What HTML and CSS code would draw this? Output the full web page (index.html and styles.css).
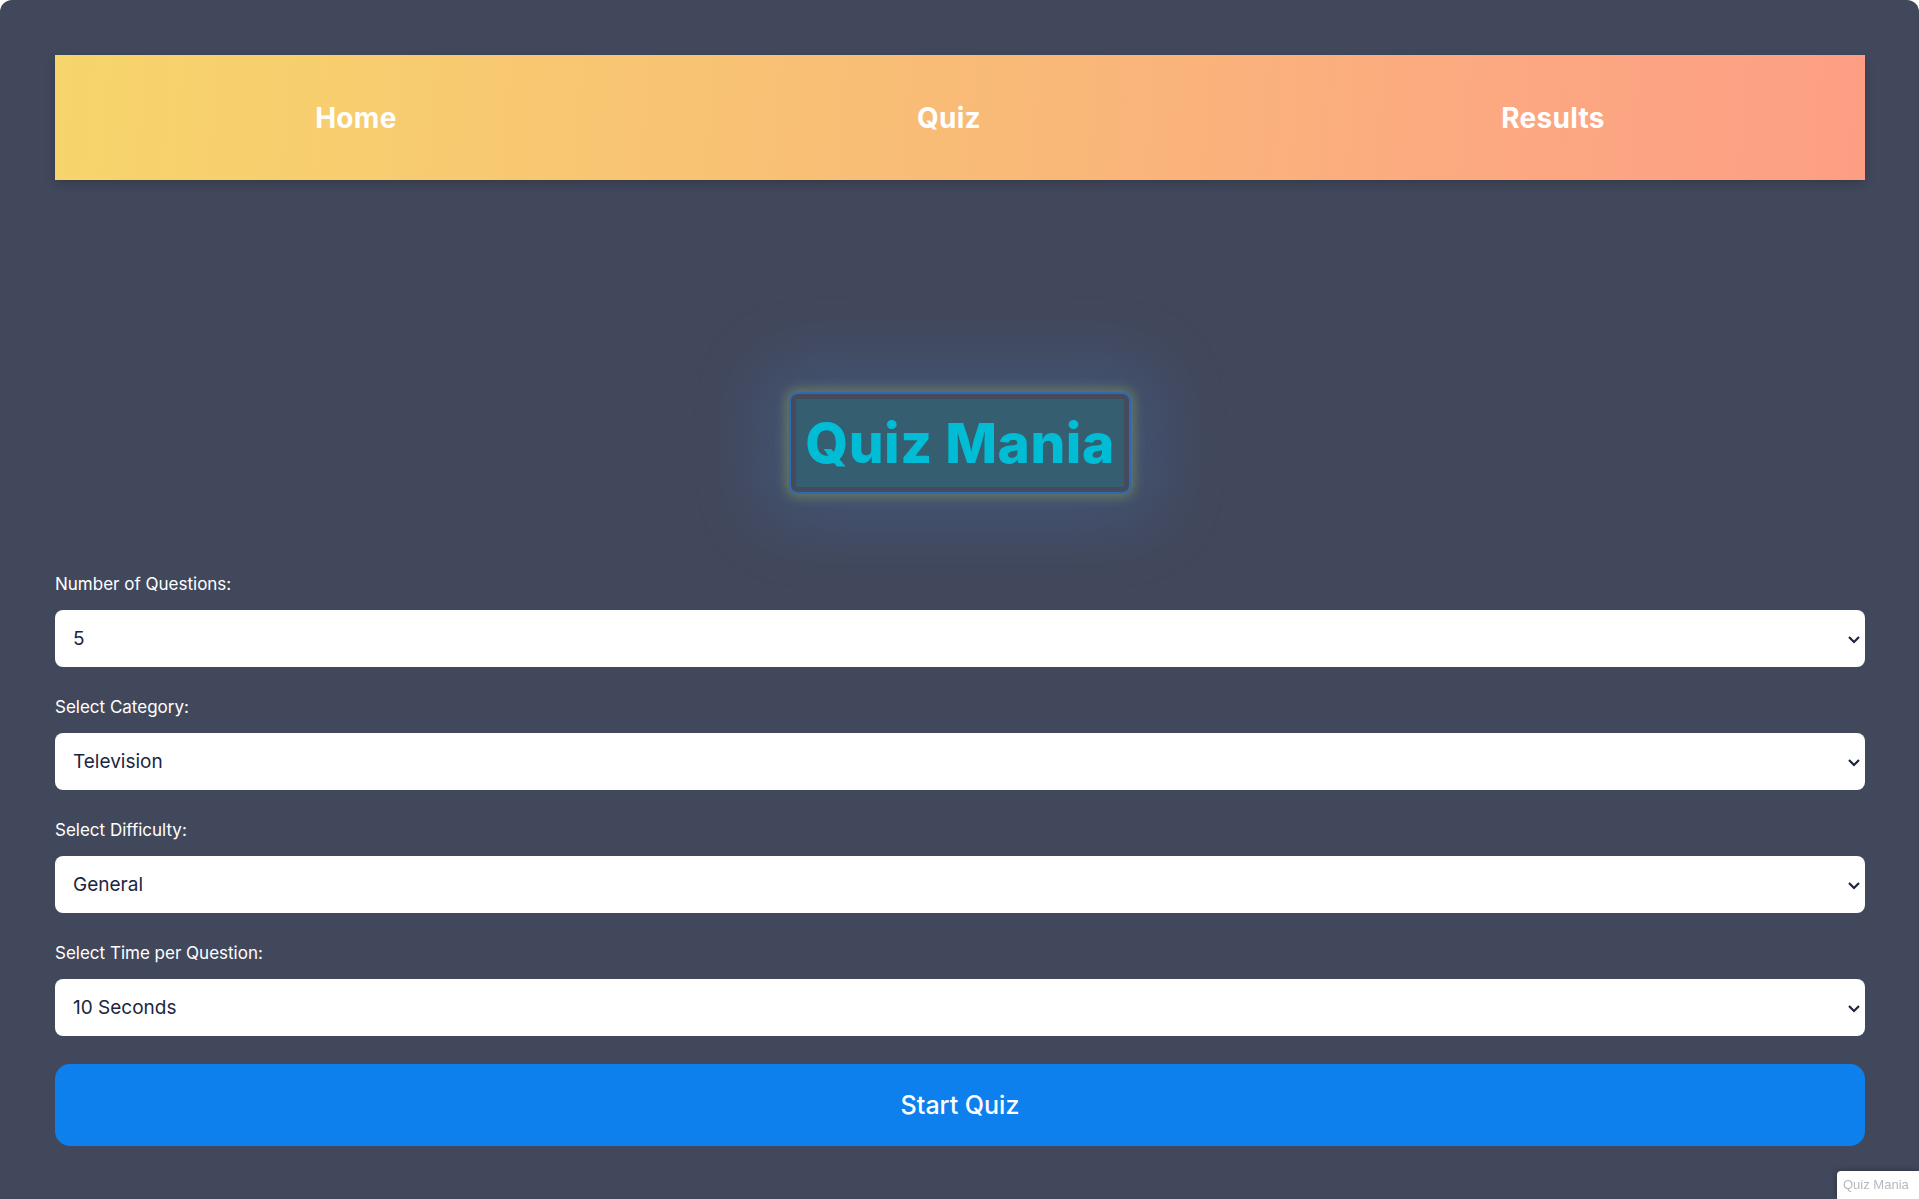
FILE: index.html
```html
<!DOCTYPE html>
<html lang="en">
<head>
<meta charset="utf-8">
<title>Quiz Mania</title>
<link rel="stylesheet" href="styles.css">
</head>
<body>
<div class="app">
  <nav class="nav">
    <a class="nav-link" href="#">Home</a>
    <a class="nav-link" href="#">Quiz</a>
    <a class="nav-link" href="#">Results</a>
  </nav>
  <div class="hero">
    <h1 class="title">Quiz Mania</h1>
  </div>
  <form class="form">
    <div class="field">
      <label class="label" for="num">Number of Questions:</label>
      <select class="select" id="num"><option>5</option><option>10</option></select>
    </div>
    <div class="field">
      <label class="label" for="cat">Select Category:</label>
      <select class="select" id="cat"><option>Television</option></select>
    </div>
    <div class="field">
      <label class="label" for="diff">Select Difficulty:</label>
      <select class="select" id="diff"><option>General</option></select>
    </div>
    <div class="field">
      <label class="label" for="time">Select Time per Question:</label>
      <select class="select" id="time"><option>10 Seconds</option></select>
    </div>
    <button class="start" type="button">Start Quiz</button>
  </form>
</div>
<div class="tooltip">Quiz Mania</div>
</body>
</html>
```
FILE: styles.css
```css
* { box-sizing: border-box; }
html, body { margin: 0; padding: 0; }
body {
  background: #ffffff;
  font-family: "Inter", "Open Sans", sans-serif;
  overflow: hidden;
}
.app {
  background: #42485c;
  min-height: 100vh;
  border-radius: 12px 12px 0 0;
  padding: 55px 54px 0 55px;
}
.nav {
  display: flex;
  justify-content: space-around;
  align-items: center;
  height: 125px;
  background: linear-gradient(95deg, #f7d56b 0%, #f8c672 30%, #f9b878 55%, #fca881 80%, #fd9e84 100%);
  box-shadow: 0 4px 10px rgba(0, 0, 0, 0.2);
}
.nav-link {
  color: #ffffff;
  text-decoration: none;
  font-size: 28px;
  font-weight: 700;
  letter-spacing: 0.3px;
}
.hero {
  display: flex;
  justify-content: center;
  padding: 214px 0 80px;
}
.title {
  margin: 0;
  font-size: 55px;
  font-weight: 800;
  letter-spacing: 0.5px;
  line-height: 88px;
  color: #00bcd4;
  background: #365e71;
  border: 5px solid #454a5c;
  outline: 2px solid #2e6ab3;
  border-radius: 6px;
  padding: 0 9px;
  box-shadow: 0 0 12px 5px rgba(160, 190, 80, 0.4), 0 0 70px 25px rgba(70, 120, 190, 0.3);
}
.form { display: flex; flex-direction: column; }
.field { display: flex; flex-direction: column; }
.label {
  color: #ffffff;
  font-size: 17px;
  line-height: 24px;
  margin-bottom: 14px;
}
.select {
  appearance: none;
  -webkit-appearance: none;
  height: 57px;
  width: 100%;
  border: none;
  border-radius: 8px;
  background: #ffffff url("data:image/svg+xml;utf8,<svg xmlns='http://www.w3.org/2000/svg' width='14' height='10' viewBox='0 0 14 10'><path d='M2 3 L7 8 L12 3' fill='none' stroke='%231c2541' stroke-width='2.2'/></svg>") no-repeat right 4px center;
  padding: 0 18px;
  font-family: "Inter", "Open Sans", sans-serif;
  font-size: 19px;
  color: #1c2541;
  margin-bottom: 28px;
}
.start {
  height: 82px;
  width: 100%;
  border: none;
  border-radius: 15px;
  background: #0d80ee;
  color: #ffffff;
  font-family: "Inter", "Open Sans", sans-serif;
  font-size: 25px;
  font-weight: 500;
}
.tooltip {
  position: fixed;
  right: 0;
  bottom: 0;
  width: 82px;
  height: 28px;
  background: #ffffff;
  border-radius: 4px 0 0 0;
  box-shadow: 0 0 6px rgba(0, 0, 0, 0.35);
  color: #b8b8c0;
  font-family: "Liberation Sans", Arial, sans-serif;
  font-size: 13px;
  line-height: 28px;
  padding-left: 6px;
}
```
